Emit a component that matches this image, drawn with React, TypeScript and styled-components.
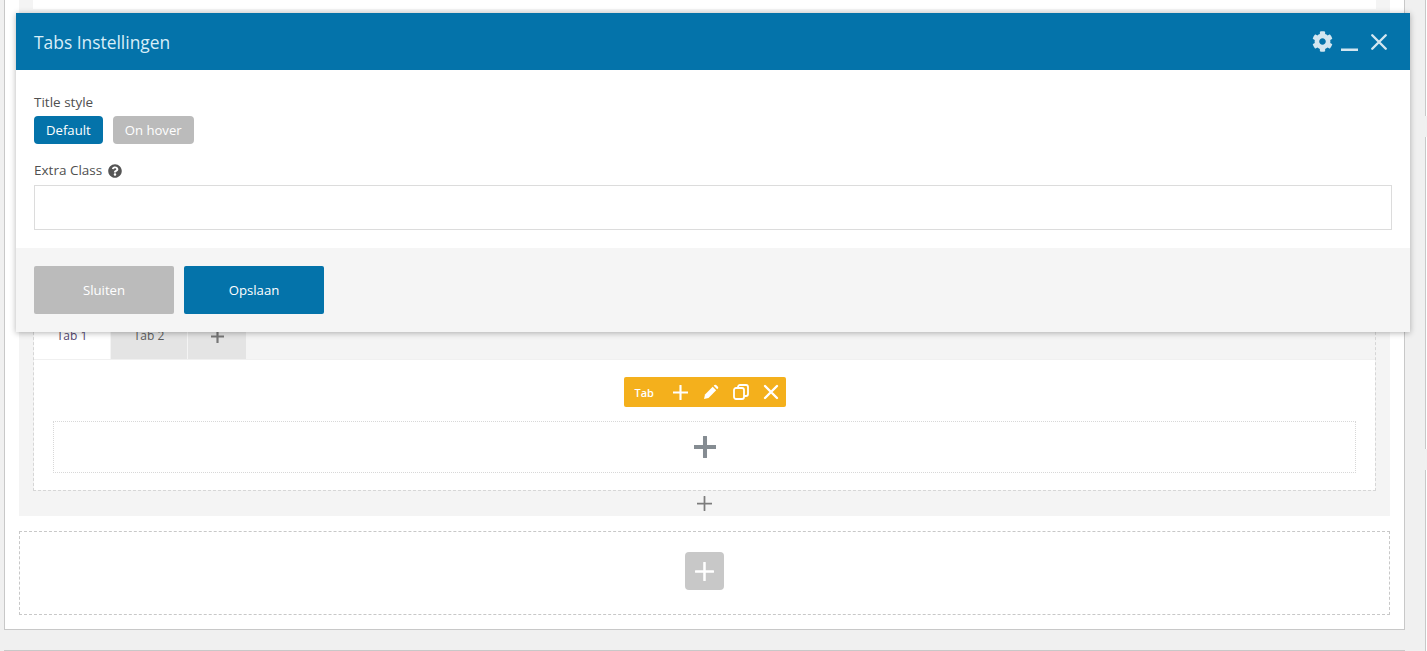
import React from "react";
import styled, { createGlobalStyle } from "styled-components";
import { FaCog, FaQuestionCircle } from "react-icons/fa";

const GlobalStyle = createGlobalStyle`
  html, body {
    margin: 0;
    height: 100%;
    overflow: hidden;
    background: #f0f0f0;
  }
  * {
    box-sizing: border-box;
  }
  #root {
    font-family: "Open Sans", "Noto Sans", sans-serif;
    color: #555;
  }
`;

const Page = styled.div`
  position: relative;
  width: 1427px;
  height: 651px;
  padding-left: 4px;
  overflow: hidden;
`;

const Editor = styled.div`
  width: 1401px;
  height: 630px;
  padding: 0 14px;
  background: #fff;
  border: 1px solid #c8c8c8;
  border-top: 0;
`;

const Section = styled.div`
  height: 516px;
  padding: 0 14px;
  background: #f4f4f4;
  display: flex;
  flex-direction: column;
`;

const TopBlock = styled.div`
  height: 9px;
  background: #fff;
`;

const TabsBox = styled.div`
  margin-top: 313px;
  height: 169px;
  border: 1px dashed #d6d6d6;
  border-top: 0;
  display: flex;
  flex-direction: column;
`;

const TabBar = styled.div`
  height: 37px;
  display: flex;
  gap: 1px;
`;

const TabItem = styled.div<{ $active?: boolean }>`
  width: 76px;
  height: 100%;
  padding-bottom: 10px;
  display: flex;
  justify-content: center;
  align-items: center;
  font-size: 12px;
  color: ${(p) => (p.$active ? "#54466e" : "#5c5c5c")};
  background: ${(p) => (p.$active ? "#fff" : "#e4e4e4")};
`;

const TabAdd = styled(TabItem)`
  width: 58px;
  padding-bottom: 8px;
`;

const TabPane = styled.div`
  flex: 1;
  background: #fff;
  border-top: 1px solid #f0f0f0;
  padding: 17px 19px;
  display: flex;
  flex-direction: column;
  align-items: center;
`;

const Toolbar = styled.div`
  height: 30px;
  width: 162px;
  padding-left: 11px;
  display: flex;
  align-items: center;
  background: #f4b01c;
  border-radius: 2px;
  color: #fff;
  font-size: 11px;
  font-weight: 600;
`;

const ToolLabel = styled.span`
  width: 31px;
`;

const ToolSlot = styled.span`
  width: 30px;
  display: flex;
  align-items: center;
  justify-content: center;
`;

const DropZone = styled.div`
  margin-top: 14px;
  align-self: stretch;
  height: 52px;
  border: 1px dotted #d8d8d8;
  display: flex;
  align-items: center;
  justify-content: center;
`;

const SectionAdd = styled.div`
  height: 25px;
  display: flex;
  align-items: center;
  justify-content: center;
`;

const NewRow = styled.div`
  height: 84px;
  margin-top: 15px;
  padding-bottom: 4px;
  border: 1px dashed #c8c8c8;
  display: flex;
  align-items: center;
  justify-content: center;
`;

const NewRowButton = styled.div`
  width: 39px;
  height: 38px;
  border-radius: 4px;
  background: #c8c8c8;
  display: flex;
  align-items: center;
  justify-content: center;
`;

const BottomRule = styled.div`
  width: 1401px;
  height: 1px;
  margin-top: 20px;
  background: #c8c8c8;
`;

const SideRule = styled.div<{ $top: number; $height: number }>`
  position: absolute;
  left: 1425px;
  top: ${(p) => p.$top}px;
  width: 2px;
  height: ${(p) => p.$height}px;
  border-left: 1px solid #c8c8c8;
  background: #fff;
`;

const Modal = styled.div`
  position: absolute;
  left: 16px;
  top: 13px;
  width: 1394px;
  height: 319px;
  background: #fff;
  box-shadow: 0 1px 6px rgba(0, 0, 0, 0.3);
  display: flex;
  flex-direction: column;
`;

const ModalHeader = styled.div`
  height: 57px;
  padding: 0 22px 0 18px;
  display: flex;
  align-items: center;
  justify-content: space-between;
  background: #0473aa;
`;

const ModalTitle = styled.h2`
  margin: 0;
  color: #d8eef8;
  font-size: 17.4px;
  font-weight: 400;
  line-height: 24px;
`;

const HeaderIcons = styled.div`
  display: flex;
  align-items: center;
  gap: 8px;
  color: #d3e6f0;
`;

const MinimizeIcon = styled.svg`
  margin-right: 4px;
`;

const ModalBody = styled.div`
  flex: 1;
  padding: 24px 18px 0;
`;

const FieldLabel = styled.div`
  font-size: 13.5px;
  line-height: 17px;
  color: #505050;
  display: flex;
  align-items: center;
  gap: 6px;
`;

const ButtonGroup = styled.div`
  margin-top: 5px;
  display: flex;
  gap: 10px;
`;

const Choice = styled.div<{ $active?: boolean }>`
  height: 28px;
  padding: 0 12px;
  display: flex;
  align-items: center;
  border-radius: 4px;
  font-size: 13.15px;
  color: #fff;
  background: ${(p) => (p.$active ? "#0473aa" : "#bbbbbb")};
`;

const ExtraLabel = styled(FieldLabel)`
  margin-top: 18px;
`;

const TextInput = styled.input`
  display: block;
  width: 100%;
  height: 45px;
  margin-top: 6px;
  border: 1px solid #dcdcdc;
  background: #fff;
  outline: none;
`;

const ModalFooter = styled.div`
  height: 84px;
  padding: 18px;
  display: flex;
  gap: 10px;
  background: #f5f5f5;
`;

const FooterButton = styled.div<{ $primary?: boolean }>`
  width: 140px;
  height: 48px;
  display: flex;
  align-items: center;
  justify-content: center;
  border-radius: 2px;
  font-size: 13.2px;
  color: #fff;
  background: ${(p) => (p.$primary ? "#0473aa" : "#bbbbbb")};
`;

const Cross = ({ size, width, color }: { size: number; width: number; color: string }) => (
  <svg width={size} height={size} viewBox="0 0 24 24" fill="none">
    <path d="M12 1v22M1 12h22" stroke={color} strokeWidth={width} strokeLinecap="round" />
  </svg>
);

const Times = ({ size, width, color }: { size: number; width: number; color: string }) => (
  <svg width={size} height={size} viewBox="0 0 24 24" fill="none">
    <path d="M3 3l18 18M21 3L3 21" stroke={color} strokeWidth={width} strokeLinecap="round" />
  </svg>
);

const Pencil = () => (
  <svg width="16" height="16" viewBox="0 0 16 16" fill="#fff">
    <path d="M1 15l1-4.5L9.7 2.8l3.5 3.5L5.5 14z" />
    <path d="M10.7 1.8l.7-.7a1.3 1.3 0 0 1 1.8 0l1.7 1.7a1.3 1.3 0 0 1 0 1.8l-.7.7z" />
  </svg>
);

const Duplicate = () => (
  <svg width="16" height="16" viewBox="0 0 16 16" fill="none" stroke="#fff" strokeWidth="1.8">
    <rect x="1" y="4" width="10" height="11" rx="2" />
    <path d="M5 4V3a2 2 0 0 1 2-2h6a2 2 0 0 1 2 2v7a2 2 0 0 1-2 2h-2" />
  </svg>
);

const Minimize = () => (
  <MinimizeIcon width="17" height="18" viewBox="0 0 17 18">
    <rect x="0" y="15.5" width="17" height="2.5" fill="#d3e6f0" />
  </MinimizeIcon>
);

export default function App() {
  return (
    <Page>
      <GlobalStyle />
      <Editor>
        <Section>
          <TopBlock />
          <TabsBox>
            <TabBar>
              <TabItem $active>Tab 1</TabItem>
              <TabItem>Tab 2</TabItem>
              <TabAdd>
                <Cross size={13} width={4} color="#777" />
              </TabAdd>
            </TabBar>
            <TabPane>
              <Toolbar>
                <ToolLabel>Tab</ToolLabel>
                <ToolSlot>
                  <Cross size={15} width={3.4} color="#fff" />
                </ToolSlot>
                <ToolSlot>
                  <Pencil />
                </ToolSlot>
                <ToolSlot>
                  <Duplicate />
                </ToolSlot>
                <ToolSlot>
                  <Times size={16} width={3.6} color="#fff" />
                </ToolSlot>
              </Toolbar>
              <DropZone>
                <Cross size={22} width={4.4} color="#858c92" />
              </DropZone>
            </TabPane>
          </TabsBox>
          <SectionAdd>
            <Cross size={15} width={2.8} color="#7c7c7c" />
          </SectionAdd>
        </Section>
        <NewRow>
          <NewRowButton>
            <Cross size={19} width={3.2} color="#fff" />
          </NewRowButton>
        </NewRow>
      </Editor>
      <BottomRule />
      <SideRule $top={0} $height={116} />
      <SideRule $top={137} $height={312} />
      <SideRule $top={470} $height={181} />
      <Modal>
        <ModalHeader>
          <ModalTitle>Tabs Instellingen</ModalTitle>
          <HeaderIcons>
            <FaCog size={21} />
            <Minimize />
            <Times size={18} width={3.2} color="#d3e6f0" />
          </HeaderIcons>
        </ModalHeader>
        <ModalBody>
          <FieldLabel>Title style</FieldLabel>
          <ButtonGroup>
            <Choice $active>Default</Choice>
            <Choice>On hover</Choice>
          </ButtonGroup>
          <ExtraLabel>
            Extra Class <FaQuestionCircle size={14} color="#555" />
          </ExtraLabel>
          <TextInput />
        </ModalBody>
        <ModalFooter>
          <FooterButton>Sluiten</FooterButton>
          <FooterButton $primary>Opslaan</FooterButton>
        </ModalFooter>
      </Modal>
    </Page>
  );
}
